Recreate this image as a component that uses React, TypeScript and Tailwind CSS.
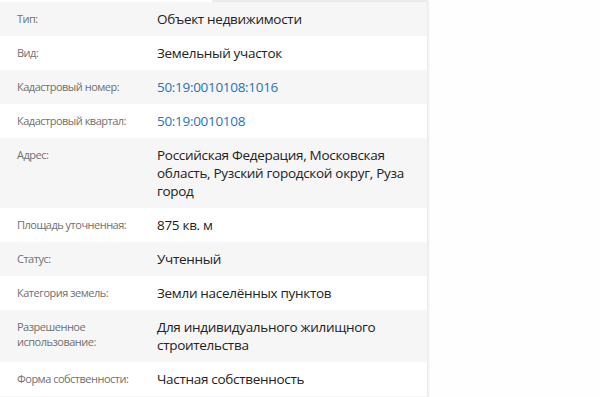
import * as React from "react";

type Row = {
  label: string;
  value: string;
  link?: boolean;
};

const rows: Row[] = [
  { label: "Тип:", value: "Объект недвижимости" },
  { label: "Вид:", value: "Земельный участок" },
  { label: "Кадастровый номер:", value: "50:19:0010108:1016", link: true },
  { label: "Кадастровый квартал:", value: "50:19:0010108", link: true },
  { label: "Адрес:", value: "Российская Федерация, Московская область, Рузский городской округ, Руза город" },
  { label: "Площадь уточненная:", value: "875 кв. м" },
  { label: "Статус:", value: "Учтенный" },
  { label: "Категория земель:", value: "Земли населённых пунктов" },
  { label: "Разрешенное использование:", value: "Для индивидуального жилищного строительства" },
  { label: "Форма собственности:", value: "Частная собственность" },
];

export default function App() {
  return (
    <div className="min-h-[397px] w-[600px] overflow-hidden bg-[#fefefe] font-['Open_Sans',sans-serif]">
      <div className="w-[427px] shadow-[1px_0_3px_rgba(0,0,0,0.12)]">
        {/* cropped tab strip above the table */}
        <div className="flex h-[2px]">
          <div className="w-[212px] bg-white" />
          <div className="flex-1 bg-[#e9ebee]" />
        </div>

        {rows.map((row, i) => (
          <div
            key={row.label}
            className={`flex py-2 ${i % 2 === 0 ? "bg-[#f6f6f6]" : "bg-white"}`}
          >
            <div className="w-[157px] shrink-0 pl-[17px] pr-4 pt-[1px] text-[11px] leading-[15px] tracking-[-0.5px] text-[#707070]">
              {row.label}
            </div>
            <div
              className={`w-[255px] text-[13.5px] leading-[18px] tracking-[-0.3px] ${
                row.link ? "text-[#2775b3]" : "text-[#222222]"
              }`}
            >
              {row.value}
            </div>
          </div>
        ))}

        <div className="h-[4px] bg-[#f6f6f6]" />
      </div>
    </div>
  );
}
